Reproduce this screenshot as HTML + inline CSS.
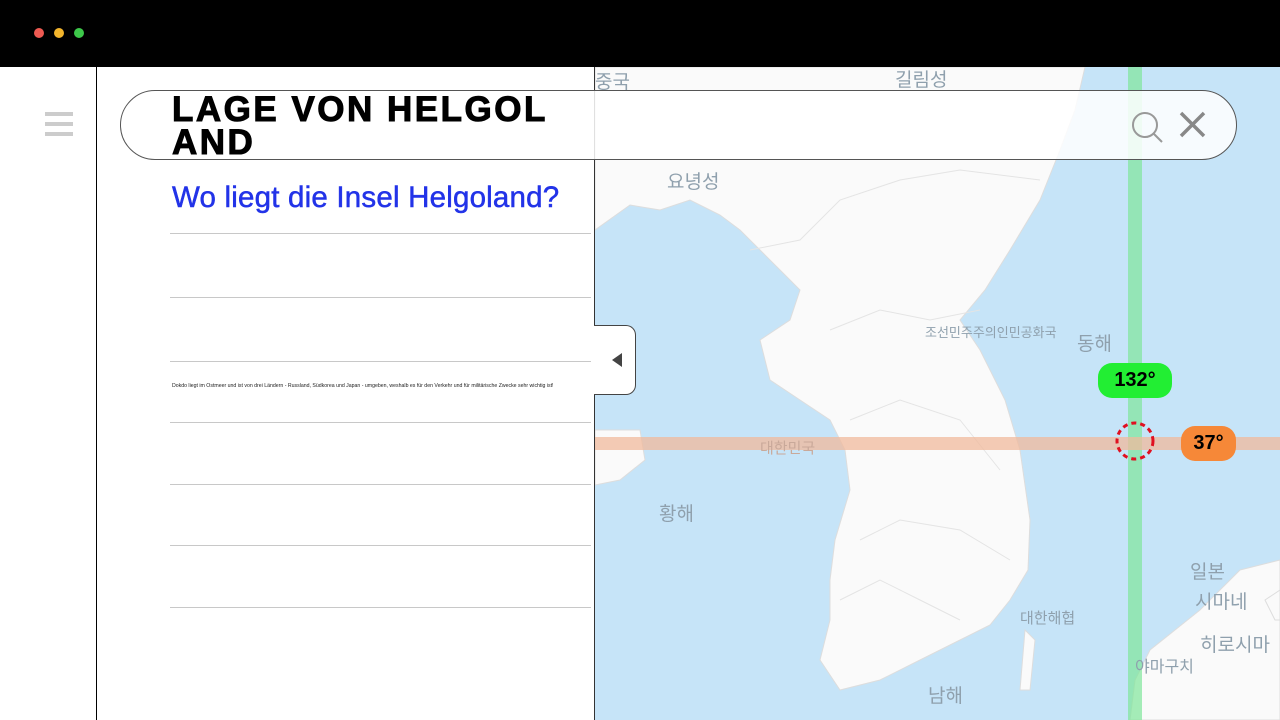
<!DOCTYPE html>
<html><head><meta charset="utf-8"><style>
*{margin:0;padding:0;box-sizing:border-box}
body{width:1280px;height:720px;overflow:hidden;background:#fff;font-family:"Liberation Sans","Noto Sans CJK KR",sans-serif;position:relative}
.top{position:absolute;left:0;top:0;width:1280px;height:67px;background:#000}
.dot{position:absolute;top:28px;width:10px;height:10px;border-radius:50%}
.side{position:absolute;left:0;top:67px;width:97px;height:653px;background:#fff;border-right:1.5px solid #000}
.ham{position:absolute;left:45px;width:28px;height:4px;background:#ccc}
.panel{position:absolute;left:97px;top:67px;width:498px;height:653px;background:#fff;border-right:1px solid #333}
.map{position:absolute;left:595px;top:67px;width:685px;height:653px;overflow:hidden;background:#c6e4f8}
.hl{position:absolute;left:170px;width:421px;height:1px;background:#c8c8c8}
.search{position:absolute;left:120px;top:90px;width:1117px;height:70px;border:1.3px solid #555;border-radius:36px;background:rgba(255,255,255,.85)}
.title{position:absolute;left:172px;top:93px;font-weight:900;font-size:35px;line-height:33px;letter-spacing:2.5px;color:#000;font-family:"Liberation Sans",sans-serif;-webkit-text-stroke:1px #000}
.pill{position:absolute;font-weight:bold;font-size:20px;color:#000;display:flex;align-items:center;justify-content:center;border-radius:14px}
.k{position:absolute;color:#8fa0ad;font-size:19px}
</style></head><body>
<div class="top"><div class="dot" style="left:34px;background:#ee5a52"></div><div class="dot" style="left:54px;background:#f3b52c"></div><div class="dot" style="left:74px;background:#3dc84a"></div></div>
<div class="side"><div class="ham" style="top:45px"></div><div class="ham" style="top:55px"></div><div class="ham" style="top:65px"></div></div>
<div class="panel"></div>
<div class="map">
<svg width="685" height="653" viewBox="595 67 685 653" style="position:absolute;left:0;top:0">
<g fill="#fafafa" stroke="#ddd" stroke-width="1">
<path d="M595 67 L1085 67 L1075 110 L1060 150 L1040 200 L1010 250 L985 290 L960 320 L980 350 L1005 400 L1020 450 L1030 520 L1028 570 L1010 600 L990 625 L960 640 L920 660 L880 680 L840 690 L820 660 L830 620 L830 580 L835 540 L850 490 L845 450 L830 420 L800 400 L770 380 L760 340 L790 320 L800 290 L780 270 L760 250 L740 230 L720 215 L690 200 L660 210 L630 205 L595 230 Z"/>
<path d="M595 430 L640 430 L645 460 L620 480 L595 485 Z"/>
<path d="M1280 560 L1240 570 L1200 610 L1150 650 L1135 680 L1130 720 L1280 720 Z"/>
<path d="M1280 590 L1265 600 L1275 620 L1280 620 Z"/>
<path d="M1025 630 L1035 640 L1030 690 L1020 690 Z"/>
</g>
<g fill="none" stroke="#e4e4e4" stroke-width="1">
<path d="M750 250 L800 240 L840 200 L900 180 L960 170 L1040 180"/>
<path d="M830 330 L880 310 L930 320 L980 310"/>
<path d="M850 420 L900 400 L960 420 L1000 470"/>
<path d="M860 540 L900 520 L960 530 L1010 560"/>
<path d="M840 600 L880 580 L920 600 L960 620"/>
</g>
<rect x="1128" y="67" width="14" height="653" fill="#7fe59a" opacity=".7"/>
<rect x="595" y="437" width="685" height="13" fill="#f0b99c" opacity=".75"/>
<circle cx="1135" cy="441" r="18" fill="none" stroke="#e01020" stroke-width="3" stroke-dasharray="5 4"/>
</svg>
<div class="k" style="left:0;top:0">중국</div>
<div class="k" style="left:300px;top:-2px">길림성</div>
<div class="k" style="left:72px;top:100px">요녕성</div>
<div class="k" style="left:482px;top:262px">동해</div>
<div class="k" style="left:64px;top:432px">황해</div>
<div class="k" style="left:595px;top:490px">일본</div>
<div class="k" style="left:600px;top:520px">시마네</div>
<div class="k" style="left:605px;top:563px">히로시마</div>
<div class="k" style="left:540px;top:586px;font-size:16px">야마구치</div>
<div class="k" style="left:425px;top:540px;font-size:15px">대한해협</div>
<div class="k" style="left:333px;top:614px">남해</div>
<div class="k" style="left:165px;top:370px;font-size:15px;color:#c9a99a">대한민국</div>
<div class="k" style="left:330px;top:255px;font-size:13px">조선민주주의인민공화국</div>
</div>
<div class="hl" style="top:233px"></div><div class="hl" style="top:297px"></div><div class="hl" style="top:361px"></div><div class="hl" style="top:422px"></div><div class="hl" style="top:484px"></div><div class="hl" style="top:545px"></div><div class="hl" style="top:607px"></div>
<div style="position:absolute;left:172px;top:181px;font-size:29.5px;letter-spacing:0.2px;color:#2233e8;-webkit-text-stroke:0.5px #2233e8">Wo liegt die Insel Helgoland?</div>
<div style="position:absolute;left:172px;top:383px;font-size:5.2px;color:#222;white-space:nowrap">Dokdo liegt im Ostmeer und ist von drei Ländern - Russland, Südkorea und Japan - umgeben, weshalb es für den Verkehr und für militärische Zwecke sehr wichtig ist!</div>
<div class="search"></div>
<div class="title">LAGE VON HELGOL<br>AND</div>
<svg style="position:absolute;left:1128px;top:108px" width="40" height="40"><circle cx="17" cy="17" r="12" fill="none" stroke="#999" stroke-width="2"/><line x1="26" y1="26" x2="34" y2="34" stroke="#999" stroke-width="2"/></svg>
<svg style="position:absolute;left:1178px;top:110px" width="30" height="30"><path d="M3 3 L26 26 M26 3 L3 26" stroke="#888" stroke-width="3.5"/></svg>
<div style="position:absolute;left:594px;top:325px;width:42px;height:70px;background:#fff;border:1px solid #444;border-left:none;border-radius:0 10px 10px 0"></div>
<div style="position:absolute;left:612px;top:353px;width:0;height:0;border-top:7px solid transparent;border-bottom:7px solid transparent;border-right:10px solid #444"></div>
<div class="pill" style="left:1098px;top:363px;width:74px;height:35px;background:#22ee33">132°</div>
<div class="pill" style="left:1181px;top:426px;width:55px;height:35px;background:#f68838">37°</div>
</body></html>
